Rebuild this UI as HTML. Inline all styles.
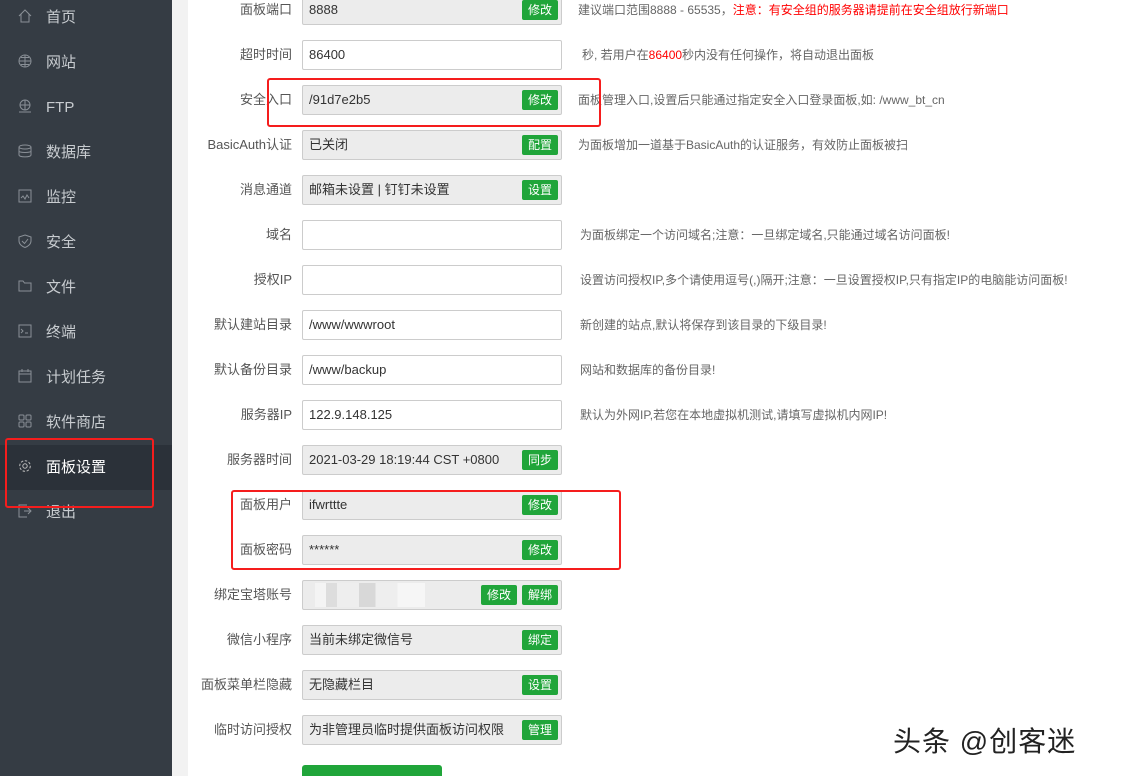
<!DOCTYPE html>
<html><head><meta charset="utf-8"><style>
*{margin:0;padding:0;box-sizing:border-box}
html,body{width:1123px;height:776px;overflow:hidden}
body{background:#fff;font-family:"Liberation Sans","Noto Sans CJK SC",sans-serif;position:relative}
.side{position:absolute;left:0;top:0;width:172px;height:776px;background:#353c44}
.gap{position:absolute;left:172px;top:0;width:16px;height:776px;background:#f2f2f2}
.ni{position:absolute;left:0;width:172px;height:45px;color:#c8ccd0;font-size:15px;line-height:45px;padding-left:46px}
.ni.act{background:#2b3139;color:#fff}
.ni svg{position:absolute;left:18px;top:14px}
.lab{position:absolute;width:292px;left:0;text-align:right;font-size:13px;color:#555;line-height:30px}
.inp{position:absolute;left:302px;width:260px;height:30px;border:1px solid #ccc;border-radius:2px;font-size:13px;color:#333;line-height:28px;padding-left:6px}
.inp.g{background:#ececec}
.btn{position:absolute;height:20px;width:36px;background:#20a53a;color:#fff;border-radius:2px;font-size:12px;line-height:20px;text-align:center;top:4px}
.desc{position:absolute;left:580px;font-size:12px;color:#666;line-height:30px;white-space:nowrap}
.red{position:absolute;border:2.5px solid #f51d1d;border-radius:3px}
</style></head><body>
<div class="side">
<div class="ni" style="top:-5px"><svg width="14" height="14" viewBox="0 0 14 14" fill="none" stroke="#8a9097"><path d="M1 7L7 1L13 7M3 5V13H11V5"/></svg>首页</div>
<div class="ni" style="top:40px"><svg width="14" height="14" viewBox="0 0 14 14" fill="none" stroke="#8a9097"><circle cx="7" cy="7" r="6"/><path d="M1 7H13M7 1V13M3 3.5H11M3 10.5H11"/></svg>网站</div>
<div class="ni" style="top:85px"><svg width="14" height="14" viewBox="0 0 14 14" fill="none" stroke="#8a9097"><circle cx="7" cy="6" r="5"/><path d="M2 6H12M7 1V11M1 13H13"/></svg>FTP</div>
<div class="ni" style="top:130px"><svg width="14" height="14" viewBox="0 0 14 14" fill="none" stroke="#8a9097"><ellipse cx="7" cy="3" rx="6" ry="2"/><path d="M1 3V11C1 13.5 13 13.5 13 11V3M1 7C1 9 13 9 13 7"/></svg>数据库</div>
<div class="ni" style="top:175px"><svg width="14" height="14" viewBox="0 0 14 14" fill="none" stroke="#8a9097"><rect x="1" y="1" width="12" height="12"/><path d="M3 9L5 7L7 10L9 6L11 9"/></svg>监控</div>
<div class="ni" style="top:220px"><svg width="14" height="14" viewBox="0 0 14 14" fill="none" stroke="#8a9097"><path d="M7 1L13 3V7C13 10 10 12.5 7 13.5C4 12.5 1 10 1 7V3Z"/><path d="M4 7L6.5 9.5L10 5"/></svg>安全</div>
<div class="ni" style="top:265px"><svg width="14" height="14" viewBox="0 0 14 14" fill="none" stroke="#8a9097"><path d="M1 2H5L6.5 4H13V12H1Z"/></svg>文件</div>
<div class="ni" style="top:310px"><svg width="14" height="14" viewBox="0 0 14 14" fill="none" stroke="#8a9097"><rect x="1" y="1" width="12" height="12"/><path d="M3 5L5 7L3 9M7 9H10"/></svg>终端</div>
<div class="ni" style="top:355px"><svg width="14" height="14" viewBox="0 0 14 14" fill="none" stroke="#8a9097"><rect x="1" y="2" width="12" height="11"/><path d="M1 5H13M4 0V3M10 0V3"/></svg>计划任务</div>
<div class="ni" style="top:400px"><svg width="14" height="14" viewBox="0 0 14 14" fill="none" stroke="#8a9097"><rect x="1" y="1" width="5" height="5" rx="1"/><rect x="8" y="1" width="5" height="5" rx="1"/><rect x="1" y="8" width="5" height="5" rx="1"/><rect x="8" y="8" width="5" height="5" rx="1"/></svg>软件商店</div>
<div class="ni act" style="top:445px"><svg width="14" height="14" viewBox="0 0 14 14" fill="none" stroke="#bbb"><circle cx="7" cy="7" r="2.2"/><circle cx="7" cy="7" r="5.3" stroke-dasharray="2.5 1.6"/></svg>面板设置</div>
<div class="ni" style="top:490px"><svg width="14" height="14" viewBox="0 0 14 14" fill="none" stroke="#8a9097"><path d="M9 1H1V13H9M6 7H13M10 4L13 7L10 10"/></svg>退出</div>
</div>
<div class="gap"></div>

<div class="lab" style="top:-5px">面板端口</div><div class="inp g" style="top:-5px">8888<div class="btn" style="left:219px">修改</div></div>
<div class="desc" style="top:-5px;left:578px">建议端口范围8888 - 65535，<span style="color:#f00">注意：有安全组的服务器请提前在安全组放行新端口</span></div>

<div class="lab" style="top:40px">超时时间</div><div class="inp" style="top:40px">86400</div>
<div class="desc" style="top:40px;left:582px">秒, 若用户在<span style="color:#f00">86400</span>秒内没有任何操作，将自动退出面板</div>

<div class="lab" style="top:85px">安全入口</div><div class="inp g" style="top:85px">/91d7e2b5<div class="btn" style="left:219px">修改</div></div>
<div class="desc" style="top:85px;left:578px">面板管理入口,设置后只能通过指定安全入口登录面板,如: /www_bt_cn</div>

<div class="lab" style="top:130px">BasicAuth认证</div><div class="inp g" style="top:130px">已关闭<div class="btn" style="left:219px">配置</div></div>
<div class="desc" style="top:130px;left:578px">为面板增加一道基于BasicAuth的认证服务，有效防止面板被扫</div>

<div class="lab" style="top:175px">消息通道</div><div class="inp g" style="top:175px">邮箱未设置 | 钉钉未设置<div class="btn" style="left:219px">设置</div></div>

<div class="lab" style="top:220px">域名</div><div class="inp" style="top:220px"></div>
<div class="desc" style="top:220px">为面板绑定一个访问域名;注意：一旦绑定域名,只能通过域名访问面板!</div>

<div class="lab" style="top:265px">授权IP</div><div class="inp" style="top:265px"></div>
<div class="desc" style="top:265px">设置访问授权IP,多个请使用逗号(,)隔开;注意：一旦设置授权IP,只有指定IP的电脑能访问面板!</div>

<div class="lab" style="top:310px">默认建站目录</div><div class="inp" style="top:310px">/www/wwwroot</div>
<div class="desc" style="top:310px">新创建的站点,默认将保存到该目录的下级目录!</div>

<div class="lab" style="top:355px">默认备份目录</div><div class="inp" style="top:355px">/www/backup</div>
<div class="desc" style="top:355px">网站和数据库的备份目录!</div>

<div class="lab" style="top:400px">服务器IP</div><div class="inp" style="top:400px">122.9.148.125</div>
<div class="desc" style="top:400px">默认为外网IP,若您在本地虚拟机测试,请填写虚拟机内网IP!</div>

<div class="lab" style="top:445px">服务器时间</div><div class="inp g" style="top:445px">2021-03-29 18:19:44 CST +0800<div class="btn" style="left:219px">同步</div></div>

<div class="lab" style="top:490px">面板用户</div><div class="inp g" style="top:490px">ifwrttte<div class="btn" style="left:219px">修改</div></div>
<div class="lab" style="top:535px">面板密码</div><div class="inp g" style="top:535px">******<div class="btn" style="left:219px">修改</div></div>

<div class="lab" style="top:580px">绑定宝塔账号</div><div class="inp g" style="top:580px">
<div style="position:absolute;left:12px;top:2px;width:110px;height:24px;background:linear-gradient(90deg,#f4f4f4 0 10%,#ddd 10% 20%,#eee 20% 40%,#d8d8d8 40% 55%,#eee 55% 75%,#f6f6f6 75%)"></div>
<div class="btn" style="left:178px">修改</div><div class="btn" style="left:219px">解绑</div></div>

<div class="lab" style="top:625px">微信小程序</div><div class="inp g" style="top:625px">当前未绑定微信号<div class="btn" style="left:219px">绑定</div></div>
<div class="lab" style="top:670px">面板菜单栏隐藏</div><div class="inp g" style="top:670px">无隐藏栏目<div class="btn" style="left:219px">设置</div></div>
<div class="lab" style="top:715px">临时访问授权</div><div class="inp g" style="top:715px">为非管理员临时提供面板访问权限<div class="btn" style="left:219px">管理</div></div>

<div style="position:absolute;left:302px;top:765px;width:140px;height:11px;background:#20a53a;border-radius:3px 3px 0 0"></div>

<div class="red" style="left:267px;top:78px;width:334px;height:49px"></div>
<div class="red" style="left:5px;top:438px;width:149px;height:70px"></div>
<div class="red" style="left:231px;top:490px;width:390px;height:80px"></div>

<div style="position:absolute;left:893px;top:720px;font-size:28px;letter-spacing:1px;color:#222;white-space:nowrap;text-shadow:0 0 2px #fff">头条 @创客迷</div>
</body></html>
